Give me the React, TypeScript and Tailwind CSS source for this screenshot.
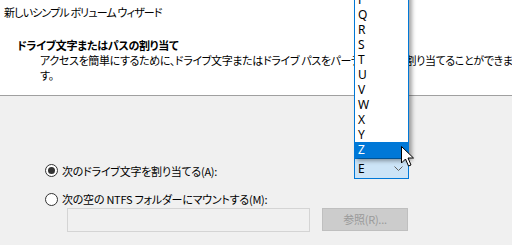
import React from "react";

const letters = ["P", "Q", "R", "S", "T", "U", "V", "W", "X", "Y", "Z"];

const Radio: React.FC<{ checked?: boolean }> = ({ checked }) => (
  <span className="flex h-[13px] w-[13px] shrink-0 items-center justify-center rounded-full border border-[#333333] bg-white">
    {checked && <span className="h-[7px] w-[7px] rounded-full bg-[#333333]" />}
  </span>
);

const DriveList: React.FC = () => (
  <div className="absolute bottom-full left-0 w-[55px] border border-[#0078d7] bg-white shadow-[3px_3px_4px_rgba(0,0,0,0.35)]">
    {letters.map((l) => (
      <div
        key={l}
        className={
          l === "Z"
            ? "h-[15px] pl-[3px] text-[12px] leading-[15px] tracking-normal bg-[#0078d7] text-white"
            : "h-[15px] pl-[3px] text-[12px] leading-[15px] tracking-normal text-black"
        }
        style={{ fontFamily: "'Noto Sans', sans-serif" }}
      >
        {l}
      </div>
    ))}
  </div>
);

const Cursor: React.FC = () => (
  <svg
    className="pointer-events-none absolute left-[47px] top-[-12px]"
    width="14"
    height="22"
    viewBox="0 0 14 22"
  >
    <path
      d="M0.5 0.5 L0.5 17 L4.5 13 L7.5 20 L10 19 L7 12 L12.5 12 Z"
      fill="white"
      stroke="black"
      strokeWidth="1"
      strokeLinejoin="miter"
    />
  </svg>
);

export default function App() {
  return (
    <div
      className="relative h-[245px] w-[512px] overflow-hidden bg-[#f0f0f0] text-[11px] leading-[15px] tracking-[-0.25px] text-black [font-feature-settings:'palt']"
      style={{ fontFamily: "'Noto Sans CJK JP', sans-serif" }}
    >
      <div className="h-[96px] border-b border-[#a0a0a0] bg-white">
        <div className="pl-[4px] pt-[5px] tracking-[-0.85px]">新しいシンプル ボリューム ウィザード</div>
        <div className="mt-[18px] pl-[17px] font-bold">ドライブ文字またはパスの割り当て</div>
        <div className="whitespace-nowrap pl-[40px] tracking-[-0.35px]">
          アクセスを簡単にするために、ドライブ文字またはドライブ パスをパーティションに割り当てることができま
          <br />
          す。
        </div>
      </div>

      <div className="w-[409px] pl-[45px] pt-[62px]">
        <div className="flex h-[21px] items-start">
          <div className="mt-[6px]">
            <Radio checked />
          </div>
          <span className="ml-[4px] mt-[5px] leading-[16px]">次のドライブ文字を割り当てる(A):</span>
          <div className="relative ml-auto h-[21px] w-[55px]">
            <DriveList />
            <div className="flex h-[21px] items-center justify-between border border-[#0078d7] bg-[#cce4f7] pl-[3px] pr-[5px]">
              <span className="text-[12px] tracking-normal" style={{ fontFamily: "'Noto Sans', sans-serif" }}>
                E
              </span>
              <svg width="9" height="5" viewBox="0 0 9 5">
                <path d="M0.5 0.5 L4.5 4.5 L8.5 0.5" fill="none" stroke="#606060" strokeWidth="1" />
              </svg>
            </div>
            <Cursor />
          </div>
        </div>

        <div className="mt-[12px] flex items-start">
          <div className="mt-[2px]">
            <Radio />
          </div>
          <span className="ml-[4px] leading-[16px]">次の空の NTFS フォルダーにマウントする(M):</span>
        </div>

        <div className="ml-[22px] mt-[1px] flex items-start">
          <div className="h-[24px] w-[243px] border border-[#d4d4d4] bg-[#f0f0f0]" />
          <div className="ml-[12px] flex h-[23px] w-[86px] items-center justify-center border border-[#bfbfbf] bg-[#cccccc] text-[#9a9a9a]">
            参照(R)...
          </div>
        </div>
      </div>
    </div>
  );
}
